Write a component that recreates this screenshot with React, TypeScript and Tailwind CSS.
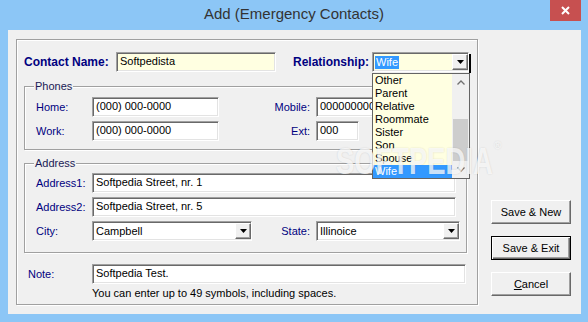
import React from "react";

const navy = "text-[#000080]";
const sunken =
    "border border-t-[#a0a0a0] border-l-[#a0a0a0] border-b-white border-r-white shadow-[inset_1px_1px_0_#696969,inset_-1px_-1px_0_#e3e3e3]";
const raised =
    "border border-t-white border-l-white border-b-[#696969] border-r-[#696969] shadow-[inset_-1px_-1px_0_#a0a0a0]";
const etched = "border border-[#a0a0a0] shadow-[1px_1px_0_#fff,inset_1px_1px_0_#fff]";

interface BoxProps {
    className: string;
    value: string;
}

const TextBox = ({ className, value }: BoxProps) => (
    <div className={`${sunken} ${className} h-[20px] pl-[3px] text-[11px] leading-[17px] text-black overflow-hidden whitespace-nowrap`}>
        {value}
    </div>
);

const Arrow = () => (
    <svg width="7" height="4" viewBox="0 0 7 4">
        <path d="M0 0h7L3.5 4z" fill="#000" />
    </svg>
);

const DropButton = () => (
    <div className={`${raised} w-[16px] h-[16px] bg-[#f0f0f0] flex items-center justify-center`}>
        <Arrow />
    </div>
);

const Combo = ({ className, value }: BoxProps) => (
    <div className={`${sunken} ${className} h-[20px] bg-white flex items-center justify-between pl-[3px] text-[11px] text-black`}>
        <span>{value}</span>
        <DropButton />
    </div>
);

const Label = ({ className, text }: { className: string; text: string }) => (
    <div className={`${className} ${navy} text-[11px] whitespace-nowrap`}>{text}</div>
);

const relations = ["Other", "Parent", "Relative", "Roommate", "Sister", "Son", "Spouse", "Wife"];

const Chevron = ({ up }: { up?: boolean }) => (
    <svg width="8" height="5" viewBox="0 0 8 5">
        <polyline
            points={up ? "0.5,4.5 4,1 7.5,4.5" : "0.5,0.5 4,4 7.5,0.5"}
            fill="none"
            stroke="#707070"
            strokeWidth="1.3"
        />
    </svg>
);

const RelationList = () => (
    <div className="absolute left-0 top-[21px] z-10 w-[98px] h-[106px] border border-[#646464] bg-[#ffffe1] flex">
        <div className="w-[79px] flex flex-col">
            {relations.map((r) => (
                <div
                    key={r}
                    className={`h-[13px] leading-[13px] pl-[2px] text-[11px] ${
                        r === "Wife" ? "bg-[#3399ff] text-white" : "text-black"
                    }`}
                >
                    {r}
                </div>
            ))}
        </div>
        <div className="w-[17px] bg-[#f0f0f0] flex flex-col">
            <div className="h-[17px] flex items-center justify-center">
                <Chevron up />
            </div>
            <div className="flex-1 flex flex-col justify-end px-[1px]">
                <div className="h-[42px] bg-[#cdcdcd]" />
            </div>
            <div className="h-[17px] flex items-center justify-center">
                <Chevron />
            </div>
        </div>
    </div>
);

const GroupTitle = ({ text }: { text: string }) => (
    <div className="absolute left-[9px] -top-[8px] bg-[#f0f0f0] px-[1px] text-[11px] leading-[14px] text-[#1a1a55]">
        {text}
    </div>
);

const Button = ({ children, main }: { children: React.ReactNode; main?: boolean }) => (
    <div
        className={`w-[80px] h-[24px] bg-[#f0f0f0] flex items-center justify-center text-[11px] text-black ${
            main
                ? "border border-black shadow-[inset_1px_1px_0_#fff,inset_-1px_-1px_0_#696969,inset_-2px_-2px_0_#a0a0a0]"
                : raised
        }`}
    >
        {children}
    </div>
);

export default function App() {
    return (
        <div className="relative w-[588px] h-[322px] bg-[#8cc6f6] flex flex-col font-['Liberation_Sans',Arial,sans-serif] overflow-hidden">
            <div className="relative h-[30px] flex items-center justify-center">
                <span className="text-[15px] text-[#333] pb-[2px]">Add (Emergency Contacts)</span>
                <div className="absolute right-[7px] top-0 w-[31px] h-[21px] bg-[#c75050] flex items-center justify-center">
                    <svg width="9" height="9" viewBox="0 0 9 9">
                        <path d="M1 1l7 7M8 1l-7 7" stroke="#fff" strokeWidth="2" />
                    </svg>
                </div>
            </div>

            <div className="ml-[8px] w-[573px] h-[284px] bg-[#f0f0f0] flex pl-[8px] pt-[9px]">
                {/* main panel */}
                <div className={`${etched} w-[462px] h-[266px] flex flex-col`}>
                    <div className="mt-[11px] pl-[7px] flex items-center">
                        <div className={`w-[92px] ${navy} text-[12px] font-bold`}>Contact Name:</div>
                        <div className={`${sunken} w-[160px] h-[20px] bg-[#ffffe1] pl-[3px] text-[11px] leading-[17px]`}>
                            Softpedista
                        </div>
                        <div className={`ml-[17px] w-[79px] ${navy} text-[12px] font-bold`}>Relationship:</div>
                        <div className="relative">
                            <div className={`${sunken} w-[97px] h-[20px] bg-[#ffffe1] flex items-center justify-between pl-[2px]`}>
                                <span className="bg-[#3399ff] text-white text-[11px] leading-[13px] px-[1px]">Wife</span>
                                <DropButton />
                            </div>
                            <RelationList />
                        </div>
                        <div className="w-[2px] h-[19px] mt-[3px] bg-black" />
                    </div>

                    {/* Phones */}
                    <div className={`${etched} relative mt-[13px] ml-[7px] w-[443px] h-[64px] pt-[10px] pl-[11px] flex flex-col gap-[4px]`}>
                        <GroupTitle text="Phones" />
                        <div className="flex items-center">
                            <Label className="w-[56px]" text="Home:" />
                            <TextBox className="w-[127px] bg-white" value="(000) 000-0000" />
                            <Label className="w-[97px] text-right pr-[6px]" text="Mobile:" />
                            <TextBox className="w-[110px] bg-white" value="000000000000" />
                        </div>
                        <div className="flex items-center">
                            <Label className="w-[56px]" text="Work:" />
                            <TextBox className="w-[127px] bg-white" value="(000) 000-0000" />
                            <Label className="w-[97px] text-right pr-[6px]" text="Ext:" />
                            <TextBox className="w-[43px] bg-white" value="000" />
                        </div>
                    </div>

                    {/* Address */}
                    <div className={`${etched} relative mt-[13px] ml-[7px] w-[443px] h-[90px] pt-[9px] pl-[11px] flex flex-col gap-[4px]`}>
                        <GroupTitle text="Address" />
                        <div className="flex items-center">
                            <Label className="w-[56px]" text="Address1:" />
                            <TextBox className="w-[364px] bg-white" value="Softpedia Street, nr. 1" />
                        </div>
                        <div className="flex items-center">
                            <Label className="w-[56px]" text="Address2:" />
                            <TextBox className="w-[364px] bg-white" value="Softpedia Street, nr. 5" />
                        </div>
                        <div className="flex items-center">
                            <Label className="w-[56px]" text="City:" />
                            <Combo className="w-[160px]" value="Campbell" />
                            <Label className="w-[64px] text-right pr-[6px]" text="State:" />
                            <Combo className="w-[144px]" value="Illinoice" />
                        </div>
                    </div>

                    {/* Note */}
                    <div className="mt-[11px] pl-[11px] flex items-center">
                        <Label className="w-[64px]" text="Note:" />
                        <TextBox className="w-[374px] bg-white" value="Softpedia Test." />
                    </div>
                    <div className="mt-[3px] pl-[75px] text-[11px] leading-[13px] text-black">
                        You can enter up to 49 symbols, including spaces.
                    </div>
                </div>

                {/* buttons */}
                <div className="ml-[13px] mt-[161px] flex flex-col gap-[12px]">
                    <Button>Save &amp; New</Button>
                    <Button main>Save &amp; Exit</Button>
                    <Button>
                        <span>
                            <span className="underline">C</span>ancel
                        </span>
                    </Button>
                </div>
            </div>

            {/* watermark */}
            <div className="absolute left-[336px] top-[143px] z-20 pointer-events-none flex items-start text-white/75 [text-shadow:0_0_2px_rgba(0,0,0,0.14)]">
                <span className="inline-block origin-left scale-x-[0.74] w-[160px] text-[37px] font-bold leading-none">SOFTPEDIA</span>
                <span className="text-[10px] leading-none -ml-[2px] -mt-[2px]">®</span>
            </div>
        </div>
    );
}
